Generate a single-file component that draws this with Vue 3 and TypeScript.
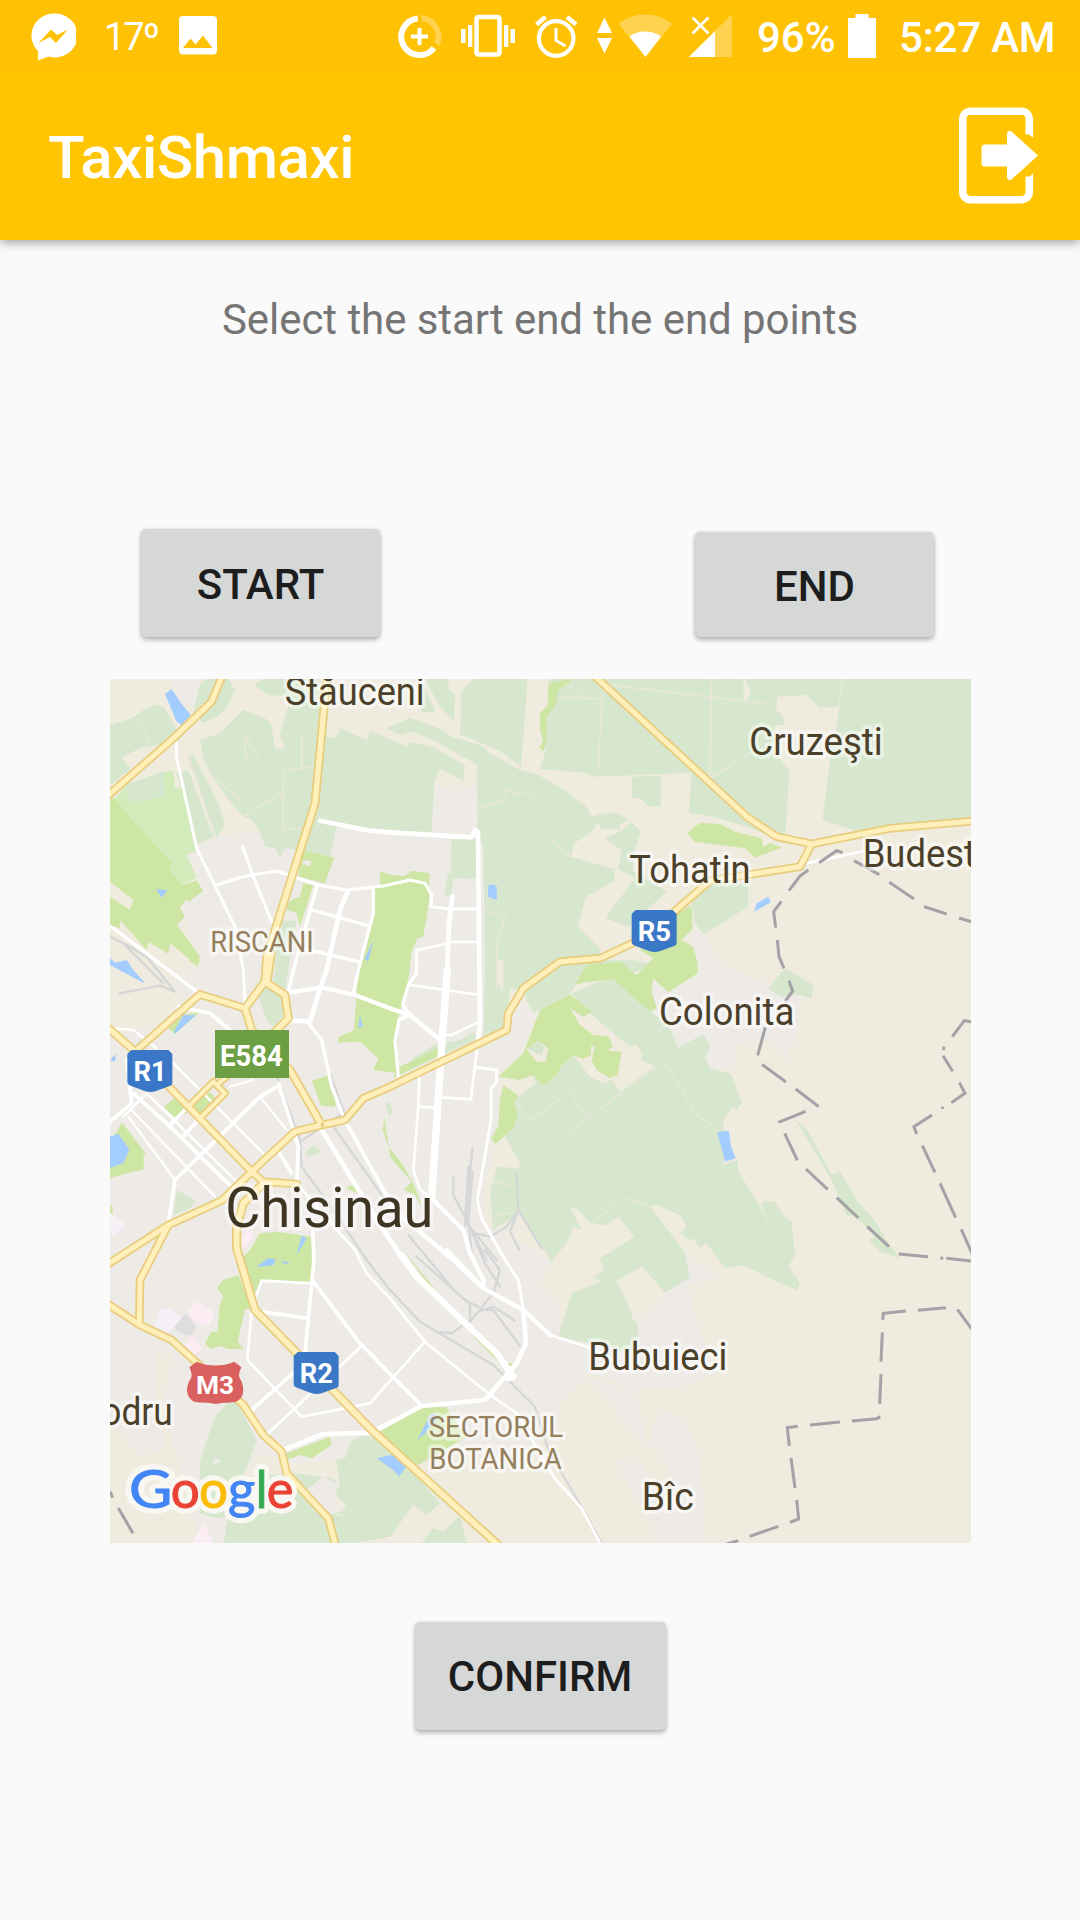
<script setup lang="ts">
interface Label {
  text: string
  x: number
  y: number
  size: number
  width?: number
  fill: string
  anchor?: 'start' | 'end'
}

const town = '#4b4029'
const district = '#94805c'

const urban: string[] = [
  '260,555 300,520 380,495 470,485 500,530 640,465 710,470 990,490 1003,350 1130,347 1150,540 1155,1070 1270,1000 1310,1030 1270,1140 1190,1220 1200,1270 1195,1370 1170,1410 1185,1440 1150,1560 1145,1630 1190,1680 1350,1770 1335,1740 1360,1780 1310,1840 1380,1910 1375,2000 1550,1850 1615,1785 1740,1740 1850,1825 1870,1790 1840,1830 1765,1840 1770,1880 1790,1960 1850,2110 1740,2150 1610,2160 1470,2110 1380,2200 1380,2240 1240,2400 960,2390 870,2320 700,2370 580,2380 480,2350 420,2420 400,2619 300,2619 240,2390 190,2210 215,2050 170,2050 165,2200 200,2330 120,2360 30,2250 30,1350 30,1100 300,1030 210,960 300,860 240,715 310,663',
  '1650,1020 1610,930 1780,830 1775,760 1810,790 1840,850 1890,890 1950,920 2005,945 2040,980 2105,980 2090,1100 2055,1170 2005,1110 1905,1120 1905,1200 1830,1195 1800,1160 1700,1130',
  '1470,2130 1610,2160 1640,2330 1680,2220 1740,2240 1790,2330 1810,2480 1814,2619 1680,2619 1620,2500 1540,2370 1610,2360 1700,2520 1740,2480 1680,2350 1610,2300',
]

const beige: string[] = [
  '30,635 100,690 90,720 30,670',
  '30,750 130,830 200,890 230,970 30,985',
  '1150,1540 1215,1410 1265,1485 1190,1490 1170,1570 1180,1680 1150,1650',
  '1000,345 1000,260 1130,280 1130,350',
]

const forest: string[] = [
  '30,165 95,145 130,120 170,103 195,115 230,180 240,210 120,235 65,262 90,298 30,345',
  '75,345 190,305 195,375 90,400',
  '300,45 320,27 385,27 405,60 380,115 350,140 308,158 280,125',
  '463,45 490,27 565,27 565,78 505,75',
  '300,210 360,190 430,120 495,145 515,165 525,237 555,235 540,195 565,110 565,27 680,27 680,200 710,205 720,175 800,210 812,182 920,230 930,215 1000,232 1092,285 1092,333 1018,295 1003,340 995,487 810,480 710,470 690,560 600,540 555,535 540,562 525,535 495,530 480,485 455,450 430,440 370,370 340,325 310,265',
  '262,262 280,252 355,400 375,465 350,505',
  '228,308 265,300 340,500 293,522',
  '860,175 930,143 1020,177 1055,200 1140,225 1170,250 1260,300 1310,313 1370,345 1460,410 1475,440 1510,430 1550,430 1590,450 1560,462 1560,478 1505,478 1492,458 1475,485 1435,513 1425,515 1413,560 1545,598 1542,632 1458,680 1433,770 1500,835 1500,870 1400,880 1270,960 1230,955 1225,1020 1215,1075 1150,1100 1155,900 1150,540 1132,480 1132,285 1010,215 940,185 900,195',
  '975,27 1045,27 1045,55 1065,75 1062,153 1020,110',
  '967,40 1007,125 965,127',
  '1085,65 1118,27 1282,27 1280,70 1263,290 1210,250 1170,230 1080,193',
  '1345,60 1350,27 1930,27 1930,90 1990,100 2030,120 2050,140 2055,165 2025,165 2025,250 2068,300 2056,495 2030,505 1940,470 1840,440 1767,427 1775,308 1740,310 1485,320 1450,308 1320,297 1335,250',
  '1935,27 2228,27 2215,110 2158,113 2120,75 2032,80 2028,118 2010,110 1940,93 1953,65',
  '2230,27 2613,27 2613,445 2370,470 2270,483 2167,450 2195,235 2210,165',
  '1595,320 1682,317 1682,410 1645,408 1622,385 1597,383',
  '1515,505 1560,485 1595,455 1622,485 1600,550 1597,600 1700,665 1585,770 1515,745 1605,625 1555,597 1565,540',
  '1945,640 1945,710 1810,793 1785,760 1775,700 1820,640',
  '1055,507 1135,507 1135,627 1060,625 1053,678 1032,675 1043,610 1052,607',
  '1280,990 1270,960 1380,890 1460,870 1600,870 1680,890 1560,915 1480,905 1425,945 1410,973 1300,1028',
  '1415,970 1500,935 1540,928 1700,1065 1610,1125 1590,1130 1470,1030',
  '1610,1125 1705,1065 1735,1135 1690,1175 1665,1188 1625,1170 1625,1145',
  '1240,1290 1310,1240 1295,1215 1375,1195 1420,1155 1470,1220 1510,1240 1535,1230 1560,1265 1740,1130 1810,1092 1832,1130 1815,1160 1830,1195 1895,1213 1915,1275 1928,1295 1910,1320 1898,1310 1870,1350 1870,1485 1913,1470 1915,1505 1980,1610 2010,1680 2055,1740 2065,1790 2100,1840 2090,1860 2020,1830 1930,1785 1875,1795 1835,1740 1818,1720 1800,1735 1778,1705 1760,1718 1740,1690 1770,1820 1725,1850 1695,1868 1625,1790 1550,1835 1598,1900 1595,1945 1615,1960 1610,2050 1375,2000 1415,1870 1505,1832 1475,1825 1510,1800 1500,1770 1400,1740 1355,1778 1335,1740 1255,1630 1180,1680 1170,1570 1190,1490 1255,1495 1263,1485 1215,1400 1250,1350',
  '2005,955 2055,895 2140,945 2135,985 2095,975 2040,980',
  '2085,1345 2125,1385 2195,1515 2220,1503 2270,1590 2330,1660 2365,1720 2400,1765 2340,1745 2305,1710 2325,1700 2270,1640 2240,1635 2195,1530',
  '1983,1605 1995,1592 2025,1597 2055,1642 2075,1653 2085,1755 2065,1790 2010,1680',
  '475,980 490,945 540,970 555,1030 520,1070 500,1050',
  '525,900 530,755 590,750 555,960 520,940',
  '230,1560 290,1592 270,1615 220,1635',
  '615,1450 640,1425 665,1445 630,1460',
  '855,1295 870,1300 882,1330 865,1335',
  '940,1165 1000,1125 1080,1110 1120,1085 1135,1105 940,1195',
  '310,2340 345,2240 380,2200 410,2195 470,2310 430,2420 580,2410 700,2425 720,2450 690,2480 735,2520 705,2535 740,2540 780,2619 370,2619 385,2540 350,2545 300,2530 300,2380',
  '708,2370 735,2365 750,2315 790,2295 960,2340 960,2430 1020,2500 980,2535 940,2505 870,2600 770,2619 740,2540 710,2530 740,2510 705,2470 720,2445',
  '965,2619 1000,2575 1030,2585 1075,2540 1170,2619',
]

const beigeOver: string[] = [
  '1410,1615 1430,1615 1470,1660 1520,1665 1555,1640 1603,1700 1500,1765 1355,1770 1400,1720 1420,1670 1445,1680',
  '1650,1610 1670,1605 1740,1635 1760,1670 1740,1690 1770,1710 1750,1740',
  '1550,1832 1625,1790 1695,1868 1610,1960 1595,1930',
  '1310,1840 1360,1780 1390,1740 1510,1740 1500,1770 1510,1800 1475,1825 1505,1832 1415,1870 1400,1910 1380,1910',
  '940,2380 1080,2320 1240,2380 1240,2460 1080,2500 1080,2540 1100,2619 1180,2619 960,2430',
  '1190,870 1210,870 1210,960 1205,965 1190,920',
]

const meadow: string[] = [
  '45,385 75,350 90,400 195,375 190,305 220,303 225,355 250,355 293,540 260,555 290,625 240,645 205,585 90,450',
]

const parks: string[] = [
  '30,385 45,385 100,455 215,580 210,600 245,645 290,632 310,663 265,695 258,688 240,715 255,740 230,765 300,860 293,887 210,820 205,852 145,815 140,840 60,750 60,775 30,765 30,680 90,720 100,690 30,635',
  '605,540 703,563 675,640 595,620',
  '565,700 575,690 600,680 610,640 640,645 600,770 590,730 560,720',
  '840,605 880,615 915,618 935,602 988,610 988,690 970,800 952,805 935,845 925,930 905,1005 890,1060 895,1210 820,1200 835,1165 780,1115 715,1118 715,1102 762,1080 775,890 800,800 820,730 820,650 840,645',
  '1345,40 1410,27 1410,35 1375,60 1367,105 1340,140 1340,210 1330,245 1317,230 1330,215 1320,180 1320,130 1345,105',
  '1760,490 1800,458 1860,462 1905,485 1985,505 1990,530 2010,518 2045,533 1965,563 1935,535 1785,515',
  '1425,945 1460,885 1560,875 1610,915 1660,865 1620,840 1720,740 1775,705 1778,775 1745,810 1780,830 1793,880 1793,910 1705,967 1660,925 1655,965 1670,1015 1650,1025 1540,928 1455,937',
  '1195,1220 1270,1150 1320,1020 1410,973 1475,1025 1450,1040 1410,1015 1440,1065 1480,1095 1525,1098 1538,1128 1525,1142 1565,1145 1553,1215 1530,1225 1490,1200 1475,1170 1485,1130 1473,1128 1473,1155 1450,1167 1420,1155 1385,1185 1370,1215 1330,1247 1300,1215 1260,1230',
  '1210,1245 1253,1275 1245,1300 1253,1340 1240,1375 1185,1422 1173,1405 1195,1370 1200,1290',
  '890,1195 1020,1132 1020,1155 880,1225',
  '65,1357 137,1450 130,1455 132,1498 30,1523 30,1410 50,1385',
  '192,1310 240,1270 270,1300 260,1330 225,1342',
  '275,1310 330,1265 350,1290 310,1335',
  '635,1232 690,1215 690,1255 710,1275 705,1310 663,1307',
  '205,1075 245,1035 300,1025 225,1092',
  '853,1340 848,1380 865,1430 905,1480 940,1540 970,1620 945,1575 912,1560 935,1535 870,1460',
  '735,1555 770,1542 775,1570',
  '430,1760 450,1740 480,1690 530,1685 635,1700 635,1840 485,1832 465,1870 440,1830',
  '352,1855 370,1830 415,1815 455,1915 435,1918 413,2015 432,2037 385,2037 358,2028 330,2038 315,2020 335,1985 353,1985 358,1910 370,1880',
  '560,2350 690,2300 695,2325 635,2365 600,2355 565,2368',
  '820,2295 965,2210 1040,2212 1055,2240 1100,2300 955,2385 870,2340',
  '30,1605 38,1610 38,1680 30,1682',
  '265,870 300,870 292,890',
  '905,1735 990,1850 1215,2080 1240,2080 1220,2100 1130,2010',
]

const water: string[] = [
  '195,72 215,57 240,95 272,135 245,165 230,155',
  '168,657 202,660 185,683',
  '30,865 45,878 80,870 100,900 137,942 30,885',
  '793,868 820,812 805,873',
  '222,1085 250,1035 287,1035 225,1092',
  '780,1035 788,1070 775,1073',
  '30,1170 47,1152 45,1175',
  '30,1400 55,1392 88,1438 70,1480 30,1493',
  '605,1697 620,1705 590,1755',
  '468,1792 505,1765 527,1768 520,1785',
  '540,1772 572,1778 555,1782',
  '830,2365 885,2353 918,2390 898,2420 880,2400',
  '952,2310 975,2265 995,2230 1015,2240 975,2290',
  '1852,1386 1887,1383 1892,1425 1907,1465 1875,1475',
  '1962,725 1970,700 2005,680 2012,697',
  '1165,650 1170,642 1190,648 1190,690 1164,680',
]

const pinks: string[] = [
  '265,1925 290,1892 345,1930 325,1970 285,1955',
  '255,2025 275,1998 305,2030 285,2058',
  '425,1710 440,1680 465,1700 430,1738',
  '275,2619 310,2560 340,2619',
]

const boundaries: string[] = [
  'M95,145L125,170 150,220M435,195L435,250 450,280M435,195L475,260M605,195V293M550,302L645,290M550,302L548,475M548,480L620,473M430,440L550,365M345,325L420,390',
  'M265,255L345,500M1133,415L1205,395 1225,357 1245,373 1272,363 1320,408M1340,500L1413,560M1150,720L1215,740 1190,830V960',
  'M1508,55L1495,300M1370,80L1508,88M1400,40L1460,85M1530,45L1740,70 2000,102M1835,27L1830,325M1830,325L1960,245',
  'M1240,1295L1265,1315 1283,1355 1410,1265 1460,1340M1370,1413L1690,1175M1690,1175L1740,1250 1790,1335 1850,1375M1175,1535L1240,1545M1180,1640L1240,1625M1480,1660L1567,1583 1650,1610',
]

const rails: string[] = [
  'M1117,1435L1097,1650 1160,1770M1060,1520V1575L1105,1660 1155,1780 1200,1850M1105,1490L1095,1670M1118,1505L1105,1650 1115,1750',
  'M1250,1510L1255,1620 1220,1670 1170,1700 1125,1690 1100,1660 1190,1770M1255,1620L1230,1685 1258,1740M1255,1620L1325,1735',
  'M530,1220L600,1410 605,1490 700,1620 800,1770 870,1860 960,1955 1180,2085 1305,2210 1345,2340 1450,2520 1505,2619',
  'M600,1415L720,1335 M700,1370L800,1510 870,1610M690,1210L740,1350M925,1695L1070,1870 1110,1900V1955L1180,1870 1200,1800 1155,1740M950,1760L1100,1895 1135,1910M1005,1985L1055,1990 1105,1955M1135,1925L1180,1910 1245,1952M1160,1920H1180L1260,2028',
  'M30,800L80,825 140,860 225,965M70,820L190,940M58,970L180,947 225,965',
]

interface Road {
  d: string
  w: number
}

const streets: Road[] = [
  { w: 14, d: 'M660,452L810,482 870,487 1115,502 1125,480 1134,485 1138,900 1140,1060 1132,1130' },
  { w: 22, d: 'M1042,900L1025,1130 995,1580' },
  { w: 14, d: 'M1057,680L1047,760 1042,900' },
  { w: 9, d: 'M230,220L228,255 290,535 405,770 430,900 435,1000M350,645L430,620 530,603 655,645 740,660 850,648 930,630 975,640 995,675 992,710 1040,716H1132M428,530L460,620 515,755' },
  { w: 10, d: 'M652,645L580,900 565,965M820,655V730L775,900 760,970M635,720L810,768M610,835L775,875M30,770L45,778 290,965' },
  { w: 14, d: 'M742,668L720,720 680,900 660,955 630,1055 565,1050' },
  { w: 13, d: 'M565,968L665,952 765,975 870,1015 930,1035 1020,1110' },
  { w: 10, d: 'M625,1060L665,1110 695,1250 740,1365M950,870V910L925,945 908,1005 930,1035 898,1048 885,1110 895,1220' },
  { w: 8, d: 'M930,945L1140,975M950,900V840L1040,822M1050,816H1132M1138,1055L1055,1095 1020,1095M1132,1130L1113,1288 1025,1282M958,1220L955,1310 940,1500 960,1560 990,1580M955,1310L1005,1313' },
  { w: 9, d: 'M1125,1192L1190,1200V1235L1173,1255V1350L1132,1590 1145,1645 1215,1770 1255,1830 1270,1920' },
  { w: 13, d: 'M990,1580L1090,1680 1110,1750 1150,1830V1855L1040,1740M870,1610L1060,1770 1150,1855 1270,1920 1350,1995' },
  { w: 8, d: 'M1350,1995L1490,2040 1540,2070 1570,2100' },
  { w: 14, d: 'M1270,1920L1278,2020 1250,2080 1155,2190 965,2208 815,2288 670,2292 550,2340' },
  { w: 14, d: 'M665,1380L770,1550 870,1710 910,1770 960,1830' },
  { w: 19, d: 'M905,1755L950,1820 1190,2050 1240,2120 1225,2125' },
  { w: 8, d: 'M590,1540L720,1690 765,1740 800,1810 870,1885 975,2015 1170,2175 1250,2230 1360,2420 1445,2515 1500,2619' },
  { w: 11, d: 'M740,1360L900,1650M638,1680L642,1770 615,2050M640,1835L780,2020 965,2208M485,1925L625,1945M455,2220L590,2100' },
  { w: 8, d: 'M465,1885L485,1832 640,1840M455,1920L442,2070 605,2240 810,2200 975,2015M502,2292L785,2028' },
  { w: 11, d: 'M30,1355L95,1300 80,1170M100,1270L200,1360 415,1570M225,1530L480,1280 540,1245M205,1660L225,1530M210,1365L270,1305M245,1405L300,1345M535,1240L580,1380 595,1430 590,1540M530,1435L575,1510' },
  { w: 7, d: 'M85,1340L225,1530M95,1320L345,1580M140,1270L410,1535M220,1180L490,1450M480,1280L560,1380M45,1075L100,1080 170,1135M70,1340L140,1270M390,1250L460,1230' },
  { w: 12, d: 'M235,1010L330,1030 390,1080' },
  { w: 8, d: 'M2120,580L2290,543' },
]

const highways: Road[] = [
  { w: 26, d: 'M370,10L335,95 220,205 20,380' },
  { w: 27, d: 'M682,10L645,400 560,670 500,860 495,935' },
  { w: 34, d: 'M510,850L498,935' },
  { w: 27, d: 'M495,935L435,1015 455,1080 570,1200 665,1365M495,935L555,975 565,1045 510,1100' },
  { w: 26, d: 'M435,1015L300,973 105,1145M20,1070L100,1140 455,1505 490,1535 590,1542' },
  { w: 26, d: 'M665,1365L585,1385 455,1505 365,1592 205,1665 20,1785M205,1665L120,1830 118,1960' },
  { w: 26, d: 'M665,1365L735,1350 790,1285 870,1250 1220,1080 1225,1030 1270,955 1380,875 1500,865 1640,800 1740,710 1830,632 2100,590 2135,522' },
  { w: 26, d: 'M1475,10L1740,255 1940,440 2030,500 2135,522 2370,475 2630,452' },
  { w: 23, d: 'M265,1310L340,1235 375,1270 300,1345M350,1245L410,1195' },
  { w: 28, d: 'M490,1540L430,1600 410,1670V1735L465,1920 820,2285 1200,2630' },
  { w: 26, d: 'M20,1900L120,1965 215,2010 430,2205 490,2295 545,2345 560,2410 685,2545 708,2630' },
]

const borders =
  'M2157,578L2210,542 2228,548M2262,572L2338,614M2368,637L2442,687M2472,710L2540,732M2577,744L2616,756M2125,600L2100,618 2067,662M2044,694L2021,725 2027,773M2032,810L2037,860 2052,895M2067,932L2078,963 2055,995M1996,1072L1973,1156M1986,1183L2058,1236M2087,1257L2156,1310M2117,1324L2035,1357M2054,1390L2092,1471M2118,1497L2183,1558M2210,1583L2275,1644M2302,1670L2367,1730M2396,1752L2484,1760M2521,1764L2530,1765M2539,1765L2616,1773M2557,1100L2593,1052 2616,1056M2532,1130L2530,1140M2529,1157L2558,1204M2578,1238L2595,1270 2554,1298M2528,1310L2527,1316M2496,1335L2442,1370 2450,1392M2467,1427L2505,1507M2520,1540L2567,1643M2584,1678L2616,1750M2572,1918L2616,1978M2538,1913L2454,1921M2418,1923L2350,1930 2348,1950M2347,1987L2343,2075M2343,2112L2339,2202M2341,2240L2330,2246 2256,2253M2220,2256L2130,2265M2093,2269L2062,2273 2068,2328M2073,2364L2085,2454M2090,2490L2096,2547 2070,2557M2035,2569L1949,2599M1915,2612L1880,2622M30,2465L38,2483M55,2514L99,2590'

const labels: Label[] = [
  { text: 'Stăuceni', x: 554, y: 104, size: 118, width: 420, fill: town },
  { text: 'Cruzeşti', x: 1948, y: 254, size: 118, width: 400, fill: town },
  { text: 'Tohatin', x: 1588, y: 638, size: 118, width: 364, fill: town },
  { text: 'Budest', x: 2288, y: 591, size: 118, width: 340, fill: town },
  { text: 'Colonita', x: 1677, y: 1065, size: 118, width: 406, fill: town },
  { text: 'Bubuieci', x: 1465, y: 2100, size: 118, width: 417, fill: town },
  { text: 'Bîc', x: 1625, y: 2520, size: 118, width: 156, fill: town },
  { text: 'Codru', x: 218, y: 2264, size: 118, width: 283, fill: town, anchor: 'end' },
  { text: 'RISCANI', x: 331, y: 846, size: 87, width: 310, fill: district },
  { text: 'SECTORUL', x: 986, y: 2301, size: 88, width: 403, fill: district },
  { text: 'BOTANICA', x: 988, y: 2397, size: 88, width: 397, fill: district },
  { text: 'Chisinau', x: 376, y: 1671, size: 168, width: 624, fill: '#3f3523' },
]

const shields = [
  { text: 'R1', x: 82, y: 1140 },
  { text: 'R5', x: 1595, y: 720 },
  { text: 'R2', x: 581, y: 2046 },
]

const logo = [
  { ch: 'G', x: 87, w: 130, fill: '#4285f4' },
  { ch: 'o', x: 212, w: 87, fill: '#ea4335' },
  { ch: 'o', x: 297, w: 87, fill: '#fbbc05' },
  { ch: 'g', x: 384, w: 82, fill: '#4285f4' },
  { ch: 'l', x: 467, w: 35, fill: '#34a853' },
  { ch: 'e', x: 500, w: 80, fill: '#ea4335' },
]
</script>

<template>
  <main class="screen">
    <header class="top">
      <div class="status">
        <svg class="messenger" width="46" height="48" viewBox="30 13 46 48">
          <path fill="#fff" d="M53.500 13.500a22.500 22 0 1 1-5 43L38 60.500V51A22.500 22 0 0 1 53.500 13.500Z" />
          <path fill="#ffc103" d="M38.500 43 51 29.500 57 35 68 29.500 56 43 50 37Z" />
        </svg>
        <span class="temp">17º</span>
        <svg class="photo" width="38" height="39" viewBox="179 16.500 38 39">
          <rect x="179" y="16.500" width="38" height="38.500" rx="4" fill="#fff" />
          <path fill="#ffc103" d="M183 48.500 190.500 39 195.500 45 203 36 212.500 48.500Z" />
        </svg>
        <svg class="icons" width="336" height="46" viewBox="397 14 336 46" fill="#fff">
          <g transform="translate(1 0)">
            <path fill="none" stroke="#fff" stroke-opacity=".3" stroke-width="6" d="M420.500 18.300A18.500 18.500 0 0 1 436 44" />
            <path fill="none" stroke="#fff" stroke-width="6" d="M416.800 18.500A18.300 18.300 0 1 0 433 48" />
            <path d="M416.500 28h4v6.500h6.500v4h-6.500V45h-4v-6.500H410v-4h6.500Z" />
          </g>
          <rect x="476.500" y="17" width="23" height="37.500" rx="2" fill="none" stroke="#fff" stroke-width="4.600" />
          <path d="M461 29h4.500v14H461ZM468 25h4.300v22H468ZM504 25h4.300v22H504ZM510.500 29h4.500v14h-4.500Z" />
          <circle cx="556.200" cy="38.500" r="17.300" fill="none" stroke="#fff" stroke-width="4.200" />
          <path fill="none" stroke="#fff" stroke-width="3" d="M556 28v12.500l9.500 5.500" />
          <path fill="none" stroke="#fff" stroke-width="4.300" d="M536.500 24.500 545.500 17M567 17 576 24.500" />
          <path d="M604.500 17.500 612 33h-15ZM597 38h15l-7.500 15.500Z" />
          <path fill-opacity=".3" d="M618.500 24a42 42 0 0 1 53.500 0L645.500 57Z" />
          <path d="M629.500 36.500a27 27 0 0 1 31.500 0L645.500 57Z" />
          <path fill-opacity=".3" d="M732 14v43H689Z" />
          <path fill="#ffc103" d="M689 14h26v17l-26 25Z" />
          <path d="M715 31v26H689Z" />
          <path fill="none" stroke="#fff" stroke-width="2.600" d="M692.500 17.500 708.500 33.500M708.500 17.500 692.500 33.500" />
        </svg>
        <span class="percent">96%</span>
        <svg class="battery" width="28" height="44" viewBox="0 0 28 44">
          <path fill="#fff" d="M7.500 0h13v4H28v40H0V4h7.500Z" />
        </svg>
        <span class="clock">5:27 AM</span>
      </div>
      <div class="appbar">
        <h1>TaxiShmaxi</h1>
        <svg class="exit" width="80" height="97" viewBox="958 107.500 80 97">
          <path fill="none" stroke="#fff" stroke-width="7.600" d="M1029.300 135V119a7.500 7.500 0 0 0-7-7.200H970a7.500 7.500 0 0 0-7.200 7.200v74a7.500 7.500 0 0 0 7.200 7.200h52.300a7.500 7.500 0 0 0 7-7.200V177" />
          <path fill="#fff" d="M1025.500 132.500 1033.100 138V130h-7.600ZM1025.500 180.500 1033.100 174V182h-7.600Z" />
          <path fill="#fff" d="M984 145h23v-11q1-4 4.500-2l26.500 24-26.500 24q-3.500 2-4.500-2v-11h-23q-2.500-.5-2.500-3v-16q0-2.500 2.500-3Z" />
        </svg>
      </div>
    </header>

    <p class="hint">Select the start end the end points</p>

    <div class="points">
      <button class="btn start" type="button">START</button>
      <button class="btn end" type="button">END</button>
    </div>

    <svg class="map" width="861" height="864" viewBox="30 27 2583 2592" preserveAspectRatio="none">
      <rect x="30" y="27" width="2583" height="2592" fill="#efebdf" />
      <path fill="#eeebe7" d="M210 27H300L285 110 230 100Z" />
      <polygon v-for="(p, i) in urban" :key="'u' + i" :points="p" fill="#eeebe7" />
      <polygon v-for="(p, i) in beige" :key="'b' + i" :points="p" fill="#efebdf" />
      <polygon v-for="(p, i) in forest" :key="'f' + i" :points="p" fill="#d6e7ce" />
      <polygon v-for="(p, i) in beigeOver" :key="'o' + i" :points="p" fill="#efebdf" />
      <polygon v-for="(p, i) in meadow" :key="'m' + i" :points="p" fill="#d3eabb" />
      <polygon points="75,345 190,305 195,375 90,400" fill="#d6e7ce" />
      <polygon v-for="(p, i) in parks" :key="'p' + i" :points="p" fill="#cde6a3" />
      <polygon points="1280,1138 1315,1113 1345,1135 1337,1175 1310,1175" fill="#efebdf" />
      <polygon points="1282,1136 1315,1113 1333,1130 1325,1158" fill="#d6e7ce" />
      <polygon points="610,570 635,573 628,588 607,583" fill="#eeebe7" />
      <polygon points="620,2460 670,2420 720,2445 695,2480 735,2520 690,2535" fill="#eeebe7" />
      <polygon points="335,2388 345,2363 365,2372" fill="#eeebe7" />
      <polygon v-for="(p, i) in pinks" :key="'k' + i" :points="p" fill="#fcedf4" />
      <polygon points="165,1970 180,1918 215,1917 245,1945 205,1990" fill="#f4f0f6" />
      <polygon points="30,1630 40,1635 78,1665 40,1700 30,1690" fill="#f4f0f6" />
      <polygon points="222,1972 258,1930 290,1972 270,1998 240,1990" fill="#dedede" />
      <polygon v-for="(p, i) in water" :key="'w' + i" :points="p" fill="#a3ccff" />
      <path v-for="(d, i) in boundaries" :key="'t' + i" :d="d" fill="none" stroke="#ece6da" stroke-width="4" />
      <path v-for="(d, i) in rails" :key="'r' + i" :d="d" class="line" stroke="#d5d6d7" stroke-width="7" />
      <path v-for="(r, i) in streets" :key="'s' + i" :d="r.d" class="line" stroke="#fff" :stroke-width="r.w" />
      <path v-for="(r, i) in highways" :key="'h' + i" :d="r.d" class="line" stroke="#e8ce80" :stroke-width="r.w" />
      <path v-for="(r, i) in highways" :key="'i' + i" :d="r.d" class="line" stroke="#fff0bb" :stroke-width="r.w - 11" />
      <ellipse cx="667" cy="1366" rx="5" ry="9" fill="#e8ce80" />
      <path :d="borders" fill="none" stroke="#a3a2a6" stroke-width="9" />

      <text
        v-for="l in labels"
        :key="l.text"
        class="label"
        :x="l.x"
        :y="l.y"
        :font-size="l.size"
        :fill="l.fill"
        :text-anchor="l.anchor ?? 'start'"
        :textLength="l.width"
        lengthAdjust="spacingAndGlyphs"
      >{{ l.text }}</text>

      <g v-for="s in shields" :key="s.text" :transform="`translate(${s.x} ${s.y})`">
        <path fill="#3a78c7" d="M12 0H123L135 12V98Q135 106 125 109L84 124Q68 128 52 123L10 107Q0 104 0 96V12Z" />
        <text class="code" x="68" y="92" text-anchor="middle" font-size="82">{{ s.text }}</text>
      </g>
      <rect x="345" y="1080" width="222" height="144" fill="#6c9f43" />
      <text class="code" x="454" y="1188" text-anchor="middle" font-size="90" textLength="188" lengthAdjust="spacingAndGlyphs">E584</text>
      <path fill="#d9605f" d="M290 2075Q346 2098 403 2075L424 2092Q410 2118 424 2133Q440 2175 412 2193Q404 2199 370 2198L347 2202 324 2198Q287 2199 278 2193Q250 2170 268 2133Q282 2118 268 2092Z" />
      <text class="code" x="345" y="2171" text-anchor="middle" font-size="79">M3</text>

      <g class="logo">
        <text v-for="(c, i) in logo" :key="'halo' + i" class="logo-halo" :x="c.x" y="2513" :textLength="c.w" lengthAdjust="spacingAndGlyphs">{{ c.ch }}</text>
        <text v-for="(c, i) in logo" :key="'ch' + i" :x="c.x" y="2513" :textLength="c.w" lengthAdjust="spacingAndGlyphs" :fill="c.fill" :stroke="c.fill" stroke-width="3">{{ c.ch }}</text>
      </g>
    </svg>

    <button class="btn confirm" type="button">CONFIRM</button>
  </main>
</template>

<style>
body {
  margin: 0;
  background: #fafafa;
}
</style>

<style scoped>
.screen {
  width: 1080px;
  height: 1920px;
  overflow: hidden;
  display: flex;
  flex-direction: column;
  background: #fafafa;
  font-family: Roboto, sans-serif;
}
.top {
  flex: none;
  color: #fff;
  background: #ffc502;
  box-shadow: 0 2px 10px rgba(0, 0, 0, 0.4);
}
.status {
  height: 72px;
  display: flex;
  align-items: flex-start;
  background: #ffc103;
  font-size: 42px;
  font-weight: 500;
  line-height: 49px;
  white-space: nowrap;
}
.status svg {
  flex: none;
}
.messenger {
  margin: 13px 0 0 30px;
}
.temp {
  width: 75px;
  margin: 13px 0 0 28px;
  box-sizing: border-box;
  font-size: 38px;
  font-weight: 400;
  letter-spacing: -2px;
}
.photo {
  margin-top: 16px;
}
.icons {
  margin: 14px 0 0 180px;
}
.percent {
  width: 91px;
  margin: 13px 0 0 24px;
}
.battery {
  margin-top: 14px;
}
.clock {
  margin: 13px 0 0 23px;
  letter-spacing: -0.2px;
}
.appbar {
  height: 168px;
  display: flex;
  align-items: flex-start;
  justify-content: space-between;
  padding: 0 42px 0 48px;
  box-sizing: border-box;
}
h1 {
  margin: 51px 0 0;
  font-size: 60px;
  line-height: 70px;
  font-weight: 500;
  letter-spacing: -0.4px;
}
.exit {
  margin-top: 35px;
}
.hint {
  margin: 55px 0 0;
  text-align: center;
  font-size: 42px;
  line-height: 49px;
  letter-spacing: -0.06px;
  color: #757575;
}
.points {
  display: flex;
  justify-content: space-between;
  align-items: flex-end;
  height: 108px;
  margin: 185px 146px 0 141px;
}
.btn {
  border: 0;
  padding: 0;
  border-radius: 5px;
  background: #d6d8d7;
  color: #1d1d1d;
  font: 500 42px / 49px Roboto, sans-serif;
  box-shadow: 0 3px 5px rgba(0, 0, 0, 0.26), 0 0 3px rgba(0, 0, 0, 0.12);
}
.start {
  width: 239px;
  height: 108px;
  padding-top: 2px;
}
.end {
  width: 239px;
  height: 105px;
  padding-top: 3px;
}
.map {
  display: block;
  flex: none;
  margin: 42px 0 0 110px;
}
.confirm {
  width: 251px;
  height: 108px;
  margin: 79px auto 0;
}
.line {
  fill: none;
  stroke-linecap: round;
  stroke-linejoin: round;
}
.label {
  font-family: Roboto, sans-serif;
  paint-order: stroke;
  stroke: rgba(255, 255, 255, 0.5);
  stroke-width: 22px;
  stroke-linejoin: round;
}
.code {
  font-family: Roboto, sans-serif;
  font-weight: 700;
  fill: #fff;
}
.logo {
  font-family: Lato, sans-serif;
  font-size: 158px;
}
.logo-halo {
  fill: #f8f7f2;
  stroke: #f8f7f2;
  stroke-width: 34px;
  stroke-linejoin: round;
}
</style>
